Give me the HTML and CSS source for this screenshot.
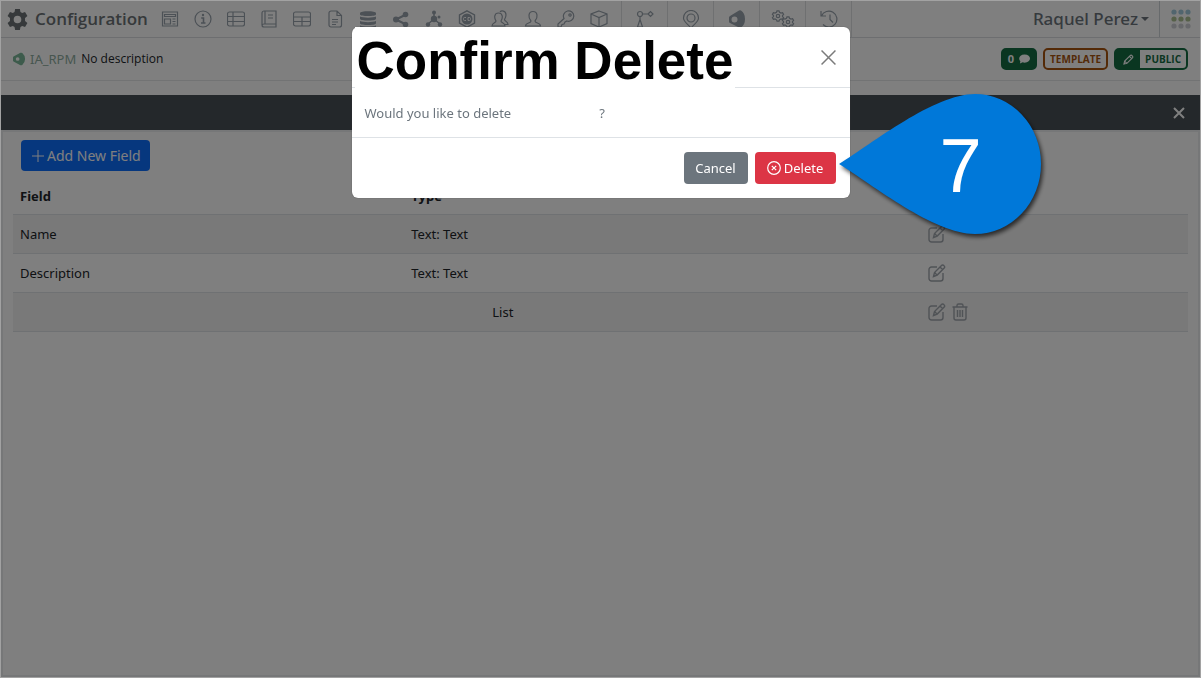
FILE: index.html
```
<!DOCTYPE html>
<html lang="en">
<head>
<meta charset="utf-8">
<meta name="viewport" content="width=device-width, initial-scale=1">
<title>Configuration</title>
<link rel="stylesheet" href="styles.css">
</head>
<body>
<svg class="sprite" aria-hidden="true">
  <symbol id="edit" viewBox="0 0 18 18"><path d="M9 3H3.500A2.500 2.500 0 0 0 1 5.500v9A2.500 2.500 0 0 0 3.500 17h9a2.500 2.500 0 0 0 2.500-2.500V9M5.500 12.500l1-4 7-7a1.500 1.500 0 0 1 2.300 0l.4.400a1.500 1.500 0 0 1 0 2.200l-7 7zM12 3l3 3M6.800 8.800l2.200 2.200"/></symbol>
</svg>
<div class="page">
  <header class="topbar">
    <div class="brand">
      <svg class="brand-gear" viewBox="0 0 22 22"><path fill-rule="evenodd" d="M8.500 0h5l.6 3.200 1.800 1 3-1.100 2.500 4.300-2.500 2.100v3l2.500 2.100-2.500 4.300-3-1.100-1.800 1-.6 3.200h-5l-.6-3.200-1.800-1-3 1.100L.600 14.600l2.500-2.100v-3L.600 7.400l2.500-4.300 3 1.100 1.800-1zM11 7a4 4 0 1 0 0 8 4 4 0 0 0 0-8z"/></svg>
      <span class="brand-name">Configuration</span>
    </div>
    <nav class="tools" aria-label="Configuration sections">
      <a href="#" aria-label="Form"><svg viewBox="0 0 18 18"><path d="M1.500 2h15v14h-15zM3.500 4.500h11v2h-11zM3.500 9h6v5h-6zM11.500 9h3M11.500 11.500h3M11.500 14h3"/></svg></a>
      <a href="#" aria-label="Information"><svg viewBox="0 0 18 18"><circle cx="9" cy="9" r="8"/><path d="M7.200 8H9.500v5M7 13h4.500" stroke-width="1.600"/><circle class="solid" cx="9" cy="5" r="1.200"/></svg></a>
      <a href="#" aria-label="List"><svg viewBox="0 0 18 18"><rect x=".5" y="2" width="17" height="14" rx="2"/><path d="M.500 6.500h17M.500 11.500h17M6 2v14"/></svg></a>
      <a href="#" aria-label="Book"><svg viewBox="0 0 18 18"><path d="M16 14V1H4a2 2 0 0 0-2 2v12a2 2 0 0 0 2 2h12v-3H4a2 2 0 0 0-2 1.500M5 1v13M8 5h5M8 8h5"/></svg></a>
      <a href="#" aria-label="Table"><svg viewBox="0 0 18 18"><rect x=".5" y="2" width="17" height="14" rx="2"/><path d="M.500 7h17M.500 11.500h17M9 7v9"/></svg></a>
      <a href="#" aria-label="Document"><svg viewBox="0 0 18 18"><path d="M3 3a2 2 0 0 1 2-2h6l4.500 4.500V15a2 2 0 0 1-2 2H5a2 2 0 0 1-2-2zM11 1v4.500h4.500M6 9.500h6M6 12h6M6 14.500h4"/></svg></a>
      <a href="#" aria-label="Database"><svg viewBox="0 0 18 18"><g class="solid"><path d="M1 3c0-2.500 16-2.500 16 0v1.500c0 2-16 2-16 0zM1 6.500c3 1.500 13 1.500 16 0V9c-1 2-15 2-16 0zM1 11c3 1.500 13 1.500 16 0v2.500c-1 2-15 2-16 0zM1 15.500c3 1.300 13 1.300 16 0V18c-3 1.500-13 1.500-16 0z"/></g></svg></a>
      <a href="#" aria-label="Share"><svg viewBox="0 0 18 18"><path stroke-width="2" d="M4 9.500l10-5M4 9.500l10 5"/><g class="solid"><circle cx="4" cy="9.500" r="3"/><circle cx="13.500" cy="4.500" r="2.800"/><circle cx="13.500" cy="14.500" r="2.800"/></g></svg></a>
      <a href="#" aria-label="Network"><svg viewBox="0 0 18 18"><path stroke-width="1.500" d="M9 9V3M9 9l-6 5M9 9l6 5"/><g class="solid"><circle cx="9" cy="9" r="3.200"/><circle cx="9" cy="2.500" r="2"/><circle cx="3" cy="14.500" r="2.200"/><circle cx="15" cy="14.500" r="2.200"/><circle cx="14" cy="7" r="1.500"/></g></svg></a>
      <a href="#" aria-label="Integration"><svg viewBox="0 0 18 18"><path d="M9 .800l7.500 4v8.400L9 17.200l-7.500-4V4.800z" stroke-width="1.400"/><circle class="solid" cx="9" cy="9" r="5.500"/><path class="cut" d="M8 7.500H6.500a1 1 0 0 0-1 1v1a1 1 0 0 0 1 1H8M10 7.500h1.500a1 1 0 0 1 1 1v1a1 1 0 0 1-1 1H10z"/></svg></a>
      <a href="#" aria-label="Groups"><svg viewBox="0 0 18 18"><path d="M5 11C3 8 3 3 7.500 3S12 8 10 11c0 2 4 1.500 4 5H1c0-3.500 4-3 4-5zM9 2c1-1.500 6-2 6 3 0 2-.6 3-1.500 4.500 0 2 3.500 1.500 3.500 5h-3"/></svg></a>
      <a href="#" aria-label="Users"><svg viewBox="0 0 18 18"><path d="M7 11C4 8 4 1.500 9 1.500S14 8 11 11c0 2.500 5.500 1.500 5.500 5h-15c0-3.500 5.500-2.500 5.500-5z"/></svg></a>
      <a href="#" aria-label="Permissions"><svg viewBox="0 0 18 18"><path d="M7 8.500A5.200 5.200 0 1 1 10 11l-2 1-1 2-2 .500L4 17H1v-3z"/><circle cx="13" cy="5" r="1.200"/></svg></a>
      <a href="#" aria-label="Packages"><svg viewBox="0 0 18 18"><path d="M9 1l8 3v9.500L9 17l-8-3.500V4zM1 4l8 3.500L17 4M9 7.500V17"/></svg></a>
    </nav>
    <nav class="modules" aria-label="Modules">
      <a href="#" aria-label="Workflow"><svg viewBox="0 0 18 18"><circle cx="4" cy="4" r="2.500"/><path d="M6.500 4H12M12 4l2.500-2.500L17 4l-2.500 2.500zM4 6.500v3M4 9.500L1.500 17h5z"/></svg></a>
      <a href="#" aria-label="Locations"><svg viewBox="0 0 18 18"><path d="M9 18C6 14 1.500 12 1.500 8a7.500 7.500 0 0 1 15 0c0 4-4.500 6-7.500 10z"/><circle cx="9" cy="8" r="4"/></svg></a>
      <a href="#" aria-label="Brand"><svg viewBox="0 0 18 18"><path class="solid" fill-rule="evenodd" d="M11 .500Q12 0 13 .500Q17 3 17 9T13 17.500Q12 18 11 17.500L2 13Q1 12.500 1 11.500V7.500Q1 6.500 2 6zM6.500 6.500a3 3 0 1 0 0 6 3 3 0 0 0 0-6z"/></svg></a>
      <a href="#" aria-label="Services"><svg class="wide" viewBox="0 0 24 18"><g id="cog"><circle cx="7" cy="6" r="1.700"/><path d="M6 .800h2l.5 1.500 1.500.800 1.600-.4 1 1.800L11.500 5.600v1L12.600 7.600l-1 1.800L10 9l-1.500.800L8 11.200H6l-.5-1.400L4 9l-1.600.400-1-1.800 1.100-1v-1l-1.100-1.100 1-1.800L4 3.100l1.500-.8z"/></g><use href="#cog" x="10" y="6"/></svg></a>
      <a href="#" aria-label="History"><svg viewBox="0 0 18 18"><path d="M1 1v5h5M1.500 6A8 8 0 1 1 3 14.500M10 4.500v5l3 3"/></svg></a>
    </nav>
    <button class="user" type="button">Raquel Perez<span class="caret"></span></button>
    <button class="apps" type="button" aria-label="Applications"><svg viewBox="0 0 20 20"><g fill="#a3cbdc"><circle cx="3" cy="3" r="2.600"/><circle cx="10" cy="3" r="2.600"/><circle cx="17" cy="3" r="2.600"/></g><g fill="#adc192"><circle cx="3" cy="10" r="2.600"/><circle cx="10" cy="10" r="2.600"/><circle cx="17" cy="10" r="2.600"/></g><g fill="#cfd1d6"><circle cx="3" cy="17" r="2.600"/><circle cx="10" cy="17" r="2.600"/><circle cx="17" cy="17" r="2.600"/></g></svg></button>
  </header>

  <div class="context">
    <svg class="context-icon" viewBox="0 0 14 14"><path fill-rule="evenodd" d="M8 .300Q9 0 10 .500Q13 3 13 7T10 13.500Q9 14 8 13.700L1 10Q0 9.500 0 8.500V5.500Q0 4.500 1 4zM5 5a2 2 0 1 0 0 4 2 2 0 0 0 0-4z"/></svg>
    <a class="context-name" href="#">IA_RPM</a>
    <span class="context-note">No description</span>
    <div class="tags">
      <button class="tag tag-count" type="button">0 <svg viewBox="0 0 12 10"><path d="M6 0c8 0 8 9 0 9L4 8.600 1 10l.5-2.500C-1.500 4 1 0 6 0z"/></svg></button>
      <span class="tag tag-template">TEMPLATE</span>
      <button class="tag tag-public" type="button"><span class="tag-pen"><svg viewBox="0 0 12 12"><path d="M1 11l.8-3.300 6-6a1.400 1.400 0 0 1 2 0l.5.500a1.400 1.400 0 0 1 0 2l-6 6zM7 2.500L9.500 5M2 8l2 2" fill="none" stroke="#fff" stroke-width="1.200"/></svg></span><span class="tag-text">PUBLIC</span></button>
    </div>
  </div>

  <main class="panel">
    <div class="panel-head"><button type="button" aria-label="Close panel"><svg viewBox="0 0 12 12"><path d="M1 1l10 10M11 1L1 11"/></svg></button></div>
    <div class="panel-body">
      <button class="btn btn-add" type="button"><svg viewBox="0 0 12 12"><path d="M6 0v12M0 6h12"/></svg>Add New Field</button>
      <table class="fields">
        <thead><tr><th class="col-field">Field</th><th class="col-type">Type</th><th aria-label="Actions"></th></tr></thead>
        <tbody>
          <tr><td>Name</td><td>Text: Text</td><td><div class="actions"><button type="button" aria-label="Edit Name"><svg viewBox="0 0 18 18"><use href="#edit"/></svg></button></div></td></tr>
          <tr><td>Description</td><td>Text: Text</td><td><div class="actions"><button type="button" aria-label="Edit Description"><svg viewBox="0 0 18 18"><use href="#edit"/></svg></button></div></td></tr>
          <tr><td></td><td class="unnamed">List</td><td><div class="actions"><button type="button" aria-label="Edit list"><svg viewBox="0 0 18 18"><use href="#edit"/></svg></button><button type="button" aria-label="Delete list"><svg viewBox="0 0 18 18"><path d="M1.500 4h15M6 4V2.500A1.500 1.500 0 0 1 7.500 1h3A1.500 1.500 0 0 1 12 2.500V4M3 4v11a2 2 0 0 0 2 2h8a2 2 0 0 0 2-2V4M6.500 7v7M9 7v7M11.500 7v7"/></svg></button></div></td></tr>
        </tbody>
      </table>
    </div>
  </main>
</div>

<div class="backdrop">
  <div class="dialog-wrap">
    <section class="dialog" role="dialog" aria-modal="true" aria-labelledby="dialog-title">
      <div class="dialog-head">
        <h1 id="dialog-title">Confirm Delete</h1>
        <button class="dialog-close" type="button" aria-label="Close"><svg viewBox="0 0 14 14"><path d="M.500.500l13 13M13.500.500l-13 13"/></svg></button>
      </div>
      <p class="dialog-body"><span>Would you like to delete</span><span>?</span></p>
      <div class="dialog-foot">
        <button class="btn btn-cancel" type="button">Cancel</button>
        <button class="btn btn-delete" type="button"><svg viewBox="0 0 14 14"><circle cx="7" cy="7" r="6.300"/><path d="M4.800 4.800l4.400 4.400M9.200 4.800L4.800 9.200"/></svg>Delete</button>
      </div>
    </section>
    <div class="callout">
      <svg viewBox="0 0 202 141"><path d="M0 70C34 49 95 0 136 0A66 70 0 0 1 202 70A66 70 0 0 1 136 140C95 140 34 91 0 70z"/></svg>
      <span>7</span>
    </div>
  </div>
</div>
</body>
</html>
```
FILE: styles.css
```
* { box-sizing: border-box; }
body { margin: 0; background: #fff; color: #212529; font: 13px/20px "Noto Sans", "Open Sans", sans-serif; }
button { font: inherit; color: inherit; background: none; border: 0; padding: 0; }
a { color: inherit; text-decoration: none; }
svg { display: block; flex: none; }
.sprite { position: absolute; width: 0; height: 0; }

.page { display: flex; flex-direction: column; min-height: 100vh; padding: 1px; }

.topbar { display: flex; height: 37px; border-bottom: 1px solid #dadde0; color: #6c757d; }
.brand { display: flex; align-items: center; gap: 7px; width: 152px; padding-left: 6px; color: #6c7376; }
.brand-gear { width: 21px; height: 21px; fill: currentColor; }
.brand-name { font: 600 17px/24px "Open Sans", sans-serif; }
.tools, .modules { display: flex; }
.tools { margin-right: 6px; }
.tools a, .modules a { display: flex; align-items: center; justify-content: center; width: 33px; }
.modules a { width: 46px; border-left: 1px solid #dee0e2; }
.modules { border-right: 1px solid #dee0e2; }
.tools svg, .modules svg { width: 18px; height: 18px; fill: none; stroke: #98a2ac; stroke-width: 1.2; }
.modules .wide { width: 24px; }
.topbar .solid { fill: #98a2ac; stroke: none; }
.topbar .cut { stroke: #fff; stroke-width: 1; }
.user { display: flex; align-items: center; gap: 3px; margin-left: auto; padding-right: 10px; font-size: 17px; font-weight: 500; }
.caret { border: 4px solid transparent; border-top-color: currentColor; border-bottom: 0; }
.apps { display: flex; align-items: center; padding: 0 9px 0 11px; border-left: 1px solid #cfd4d9; }
.apps svg { width: 20px; height: 20px; }

.context { display: flex; align-items: center; height: 43px; padding: 0 12px; border-bottom: 1px solid #e4e6e8; }
.context-icon { width: 13px; height: 14px; margin-right: 4px; fill: #7bb798; }
.context-name { margin-right: 5px; color: #8eaca0; font-size: 13px; }
.context-note { font: 12px/20px "Open Sans", sans-serif; }
.tags { display: flex; gap: 6px; margin-left: auto; }
.tag { display: flex; align-items: center; height: 22px; border: 2px solid #146c43; border-radius: 5px; font: 700 10px/18px "Open Sans", sans-serif; }
.tag-count { gap: 5px; padding: 0 5px; background: #146c43; color: #fff; font-size: 11px; }
.tag-count svg { width: 11px; height: 10px; fill: #fff; }
.tag-template { padding: 0 5px; border-color: #a8540f; color: #a8540f; }
.tag-public { color: #146c43; }
.tag-pen { display: flex; align-items: center; justify-content: center; width: 24px; height: 18px; background: #146c43; }
.tag-pen svg { width: 11px; height: 11px; }
.tag-text { padding: 0 5px; }

.panel { display: flex; flex-direction: column; flex: 1; margin-top: 14px; }
.panel-head { display: flex; align-items: center; justify-content: flex-end; height: 35px; padding-right: 15px; background: #495157; }
.panel-head svg { width: 12px; height: 12px; stroke: #fff; stroke-width: 2; }
.panel-body { flex: 1; padding: 8px 10px; border: 2px solid #eceff1; }
.btn { display: inline-flex; align-items: center; justify-content: center; gap: 3px; height: 32px; border-radius: 4px; color: #fff; }
.btn svg { fill: none; stroke: currentColor; }
.btn-add { height: 31px; margin-left: 8px; padding: 0 9px 0 11px; background: #0d6efd; font-size: 14px; }
.btn-add svg { width: 12px; height: 12px; stroke-width: 1; }

.fields { width: 100%; margin-top: 7px; border-collapse: collapse; text-align: left; color: #212529; }
.fields th, .fields td { height: 39px; padding: 0 7px; border-bottom: 1px solid #dee2e6; }
.fields th { height: 36px; font-weight: 700; }
.fields tbody tr:nth-child(odd) { background: #f2f2f2; }
.col-field { width: 33.3%; }
.col-type { width: 44%; }
.fields td.unnamed { padding-left: 88px; }
.actions { display: flex; gap: 5px; }
.actions svg { width: 18px; height: 18px; fill: none; stroke: #a0a6ad; stroke-width: 1.4; }

.backdrop { position: fixed; inset: 0; border: 1px solid #a2a2a2; background: rgba(0, 0, 0, .5) padding-box; }
.dialog-wrap { position: relative; width: 498px; max-width: 100%; margin: 26px auto 0; }
.dialog { border-radius: 6px; background: #fff; box-shadow: 0 0 1px #333; }
.dialog-head { display: flex; justify-content: space-between; height: 61px; padding: 0 14px 0 3px; border-bottom: 1px solid #dee2e6; }
.dialog-head h1 { margin: 0 0 -1px; padding: 0 2px; background: #fff; color: #000; font: 700 53px/68px "Liberation Sans", Arial, sans-serif; height: 61px; white-space: nowrap; }
.dialog-close svg { width: 15px; height: 15px; fill: none; stroke: #7b7b7b; stroke-width: 1.4; }
.dialog-body { display: flex; gap: 88px; margin: 0; padding: 15px 13px 14px; border-bottom: 1px solid #dee2e6; color: #6c757d; }
.dialog-foot { display: flex; justify-content: flex-end; gap: 7px; padding: 14px; }
.btn-cancel { width: 64px; background: #6c757d; }
.btn-delete { width: 81px; background: #dc3545; }
.btn-delete svg { width: 14px; height: 14px; stroke-width: 1.2; }

.callout { position: absolute; left: 487px; top: 67px; width: 202px; }
.callout svg { width: 100%; height: 141px; overflow: visible; fill: #0078d9; filter: drop-shadow(2px 3px 2px rgba(0, 0, 0, .65)); }
.callout span { position: absolute; left: 101px; top: 28px; color: #fff; font: 76px/88px "Liberation Sans", Arial, sans-serif; }
```
